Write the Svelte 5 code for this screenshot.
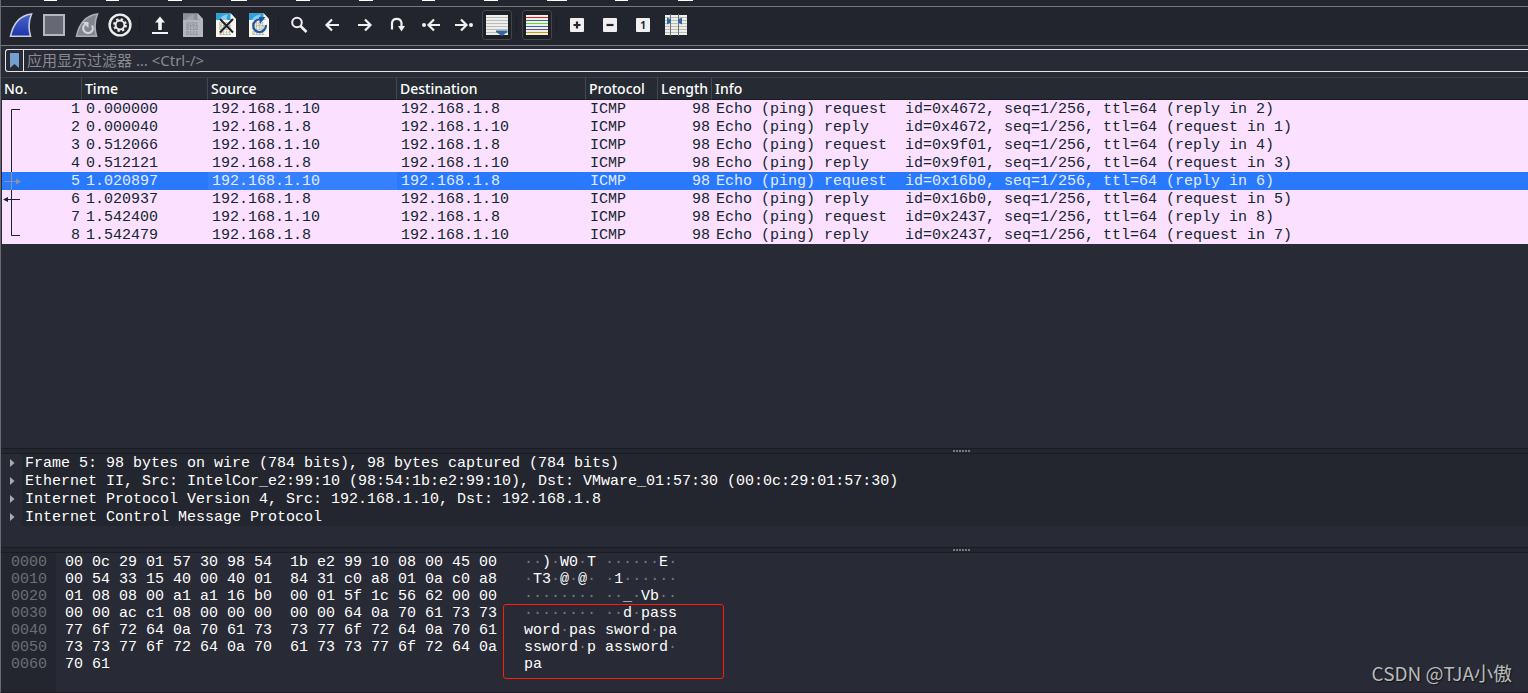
<script lang="ts">
  interface Packet {
    no: number;
    time: string;
    src: string;
    dst: string;
    proto: string;
    len: number;
    info: string;
  }

  const menus = [
    { label: 'File', gap: 43, width: 13 },
    { label: 'Edit', gap: 49, width: 13 },
    { label: 'View', gap: 49, width: 14 },
    { label: 'Go', gap: 49, width: 16 },
    { label: 'Capture', gap: 49, width: 14 },
    { label: 'Analyze', gap: 49, width: 14 },
    { label: 'Statistics', gap: 49, width: 13 },
    { label: 'Telephony', gap: 49, width: 14 },
    { label: 'Wireless', gap: 49, width: 20 },
    { label: 'Tools', gap: 48, width: 13 },
    { label: 'Help', gap: 50, width: 15 }
  ];

  const tools = [
    { icon: 'start', label: 'Start capture' },
    { icon: 'stop', label: 'Stop capture' },
    { icon: 'restart', label: 'Restart capture' },
    { icon: 'options', label: 'Capture options' },
    { icon: 'sep', label: '' },
    { icon: 'open', label: 'Open file' },
    { icon: 'save', label: 'Save file' },
    { icon: 'close', label: 'Close file' },
    { icon: 'reload', label: 'Reload file' },
    { icon: 'sep', label: '' },
    { icon: 'find', label: 'Find packet' },
    { icon: 'prev', label: 'Previous packet' },
    { icon: 'next', label: 'Next packet' },
    { icon: 'goto', label: 'Go to packet' },
    { icon: 'first', label: 'First packet' },
    { icon: 'last', label: 'Last packet' },
    { icon: 'autoscroll', label: 'Auto scroll', checked: true },
    { icon: 'sep', label: '' },
    { icon: 'colorize', label: 'Colorize packets', checked: true },
    { icon: 'sep', label: '' },
    { icon: 'zoomin', label: 'Zoom in' },
    { icon: 'zoomout', label: 'Zoom out' },
    { icon: 'zoomreset', label: 'Normal size' },
    { icon: 'columns', label: 'Resize columns' }
  ];

  const columns = ['No.', 'Time', 'Source', 'Destination', 'Protocol', 'Length', 'Info'];

  const A = '192.168.1.10';
  const B = '192.168.1.8';

  function packet(no: number, time: string, id: string): Packet {
    const request = no % 2 === 1;
    const kind = request ? 'request ' : 'reply   ';
    const peer = request ? `(reply in ${no + 1})` : `(request in ${no - 1})`;
    return {
      no,
      time,
      src: request ? A : B,
      dst: request ? B : A,
      proto: 'ICMP',
      len: 98,
      info: `Echo (ping) ${kind} id=${id}, seq=1/256, ttl=64 ${peer}`
    };
  }

  const packets: Packet[] = [
    packet(1, '0.000000', '0x4672'),
    packet(2, '0.000040', '0x4672'),
    packet(3, '0.512066', '0x9f01'),
    packet(4, '0.512121', '0x9f01'),
    packet(5, '1.020897', '0x16b0'),
    packet(6, '1.020937', '0x16b0'),
    packet(7, '1.542400', '0x2437'),
    packet(8, '1.542479', '0x2437')
  ];

  const layers = [
    'Frame 5: 98 bytes on wire (784 bits), 98 bytes captured (784 bits)',
    'Ethernet II, Src: IntelCor_e2:99:10 (98:54:1b:e2:99:10), Dst: VMware_01:57:30 (00:0c:29:01:57:30)',
    'Internet Protocol Version 4, Src: 192.168.1.10, Dst: 192.168.1.8',
    'Internet Control Message Protocol'
  ];

  const dump = [
    ['0000', '00 0c 29 01 57 30 98 54  1b e2 99 10 08 00 45 00', '··)·W0·T ······E·'],
    ['0010', '00 54 33 15 40 00 40 01  84 31 c0 a8 01 0a c0 a8', '·T3·@·@· ·1······'],
    ['0020', '01 08 08 00 a1 a1 16 b0  00 01 5f 1c 56 62 00 00', '········ ··_·Vb··'],
    ['0030', '00 00 ac c1 08 00 00 00  00 00 64 0a 70 61 73 73', '········ ··d·pass'],
    ['0040', '77 6f 72 64 0a 70 61 73  73 77 6f 72 64 0a 70 61', 'word·pas sword·pa'],
    ['0050', '73 73 77 6f 72 64 0a 70  61 73 73 77 6f 72 64 0a', 'ssword·p assword·'],
    ['0060', '70 61', 'pa']
  ];

  let selected = $state(5);
  let filter = $state('');

  // unprintable bytes are dimmed, so split them from the readable runs
  function runs(text: string): string[] {
    return text.match(/·+|[^·]+/g) ?? [];
  }
</script>

{#snippet fin(fill: string, stroke: string)}
  <path d="M1.5 23.3C4 11 11 2.5 22.5 1C19.5 8 19.5 16 21.5 23.3Z" {fill} {stroke} stroke-width="1.6" />
{/snippet}

{#snippet page(paper: string, band: string, ink: string)}
  <path d="M2 0.5H17L22 6V24H2Z" fill={paper} />
  <path d="M2 0.5H17L19 7H2Z" fill={band} />
  <path d="M5 7C7 3 11 1.5 14 1.5C12.5 4 12.5 5 13 7Z" fill={paper} opacity="0.5" />
  <path d="M16.5 0.5L22 6.5H16.5Z" fill={paper} />
  <g class="bits" fill={ink}>
    <text x="5" y="12.5">0101</text>
    <text x="5" y="17">0110</text>
    <text x="5" y="21.5">0111</text>
  </g>
{/snippet}

{#snippet glyph(icon: string)}
  <svg width="24" height="24" viewBox="0 0 24 24" fill="none" aria-hidden="true">
    {#if icon === 'start'}
      <defs>
        <linearGradient id="fin" x1="0" y1="0" x2="0" y2="1">
          <stop offset="0" stop-color="#4a66cf" />
          <stop offset="1" stop-color="#1c35a8" />
        </linearGradient>
      </defs>
      {@render fin('url(#fin)', '#c9cedd')}
    {:else if icon === 'stop'}
      <rect x="2" y="2" width="20" height="20" fill="#666973" stroke="#b4b6c2" stroke-width="2" />
    {:else if icon === 'restart'}
      {@render fin('#84868e', '#abadb6')}
      <path d="M10 11.5A4.8 4.8 0 1 0 17 12.5" stroke="#d5d6da" stroke-width="2.2" />
      <path d="M7.5 9H13.5V15Z" fill="#d5d6da" />
    {:else if icon === 'options'}
      <circle cx="12" cy="12" r="10.4" stroke="#efefef" stroke-width="2.4" />
      <circle cx="12" cy="12" r="6" stroke="#efefef" stroke-width="1.8" stroke-dasharray="2.4 2.312" />
      <circle cx="12" cy="12" r="4.4" stroke="#efefef" stroke-width="2" />
    {:else if icon === 'open'}
      <path d="M12 3.5L17 9.5H13.8V17H10.2V9.5H7ZM4 19H20V21H4Z" fill="#f4f4f4" />
    {:else if icon === 'save'}
      {@render page('#b4b6be', '#8e9098', '#7b7d85')}
    {:else if icon === 'close'}
      {@render page('#f6f6ec', '#2ba4dd', '#8b8b80')}
      <path d="M6 6L19 19.5M19 6L6 19.5" stroke="#1d2026" stroke-width="2" />
    {:else if icon === 'reload'}
      {@render page('#f6f6ec', '#2ba4dd', '#8b8b80')}
      <path d="M13 6.5A6.3 6.3 0 1 0 18.8 12" stroke="#2054a0" stroke-width="2.2" />
      <path d="M12 4H18.5L13 11Z" fill="#2054a0" />
    {:else if icon === 'find'}
      <circle cx="10" cy="9.5" r="4.8" stroke="#f0f0f0" stroke-width="2" />
      <path d="M13.5 13L19.5 19" stroke="#f0f0f0" stroke-width="2.6" />
    {:else if icon === 'prev'}
      <path d="M19 12H7M12 6.5L6.5 12L12 17.5" stroke="#f0f0f0" stroke-width="2.2" />
    {:else if icon === 'next'}
      <path d="M5 12H17M12 6.5L17.5 12L12 17.5" stroke="#f0f0f0" stroke-width="2.2" />
    {:else if icon === 'goto'}
      <path d="M6 16.5V10A4.8 4.8 0 0 1 15.5 10V14" stroke="#f0f0f0" stroke-width="2.2" />
      <path d="M12 13H19L15.5 18.5Z" fill="#f0f0f0" />
    {:else if icon === 'first'}
      <circle cx="5" cy="12" r="2" fill="#f0f0f0" />
      <path d="M21 12H10M15 6.5L9.5 12L15 17.5" stroke="#f0f0f0" stroke-width="2.2" />
    {:else if icon === 'last'}
      <circle cx="19" cy="12" r="2" fill="#f0f0f0" />
      <path d="M3 12H14M9 6.5L14.5 12L9 17.5" stroke="#f0f0f0" stroke-width="2.2" />
    {:else if icon === 'autoscroll'}
      <rect x="1" y="2" width="22" height="20" fill="#eeeeec" />
      <path d="M1 4.5H23M1 7.5H23M1 10.5H23M1 13.5H23M1 16.5H23M1 19.5H23" stroke="#babdb6" />
      <path d="M11 17.5H22.5V19L17 23L11 19Z" fill="#3465a4" />
    {:else if icon === 'colorize'}
      <rect x="1" y="2" width="22" height="20" fill="#eeeeec" />
      <path d="M1 4.5H23" stroke="#e02020" />
      <path d="M1 7.5H23M1 13.5H23" stroke="#3465a4" />
      <path d="M1 10.5H23" stroke="#73d216" />
      <path d="M1 16.5H23" stroke="#75507b" />
      <path d="M1 19.5H23" stroke="#c4a000" />
    {:else if icon === 'zoomin'}
      <rect x="5" y="5" width="14" height="14" rx="1" fill="#f0f0f0" />
      <path d="M8.5 12H15.5M12 8.5V15.5" stroke="#23262e" stroke-width="2.2" />
    {:else if icon === 'zoomout'}
      <rect x="5" y="5" width="14" height="14" rx="1" fill="#f0f0f0" />
      <path d="M8.5 12H15.5" stroke="#23262e" stroke-width="2.2" />
    {:else if icon === 'zoomreset'}
      <rect x="5" y="5" width="14" height="14" rx="1" fill="#f0f0f0" />
      <text class="one" x="12" y="16" text-anchor="middle" fill="#23262e">1</text>
    {:else if icon === 'columns'}
      <rect x="1" y="2" width="22" height="20" fill="#eeeeec" />
      <path d="M1 4.5H23M1 7.5H23M1 10.5H23M1 13.5H23M1 16.5H23M1 19.5H23" stroke="#babdb6" />
      <path d="M6.5 1V23M14.5 1V23" stroke="#6f716d" />
      <path d="M3 4.5L7 6.5V9.5L3 11.5ZM18 4.5L14 6.5V9.5L18 11.5Z" fill="#3465a4" />
    {/if}
  </svg>
{/snippet}

{#snippet related(no: number)}
  <svg class="related" width="20" height="18" viewBox="0 0 20 18" fill="none" aria-hidden="true">
    {#if no === packets[0].no}
      <path d="M18 9.5H9.5V18" stroke="#12272e" />
    {:else if no === packets.length}
      <path d="M18 9.5H9.5V0" stroke="#12272e" />
    {:else if no === 5}
      <path d="M9.5 0V18M2 9.5H15" stroke="#8b93a5" />
      <path d="M14 6.5L19 9.5L14 12.5Z" fill="#8b93a5" />
    {:else if no === 6}
      <path d="M9.5 0V18M5 9.5H18" stroke="#12272e" />
      <path d="M6 7L1 9.5L6 12Z" fill="#12272e" />
    {:else}
      <path d="M9.5 0V18" stroke="#12272e" />
    {/if}
  </svg>
{/snippet}

{#snippet splitter()}
  <div class="splitter">
    {#each Array(6) as _}
      <i></i>
    {/each}
  </div>
{/snippet}

<div class="window">
  <nav class="menubar">
    {#each menus as menu}
      <button
        type="button"
        aria-label={menu.label}
        style="margin-left: {menu.gap}px; width: {menu.width}px"
      ></button>
    {/each}
  </nav>

  <div class="toolbar" role="toolbar" aria-label="Main toolbar">
    {#each tools as tool}
      {#if tool.icon === 'sep'}
        <span class="sep"></span>
      {:else}
        <button type="button" class="tool" aria-label={tool.label}>
          <span class="face" class:checked={tool.checked}>{@render glyph(tool.icon)}</span>
        </button>
      {/if}
    {/each}
  </div>

  <div class="filter">
    <button type="button" class="bookmark" aria-label="Filter bookmarks">
      <svg width="9" height="15" viewBox="0 0 9 15" aria-hidden="true">
        <path d="M0 0H9V15L4.5 11L0 15Z" fill="#729fcf" />
      </svg>
    </button>
    <input
      type="text"
      aria-label="应用显示过滤器"
      placeholder="应用显示过滤器 … <Ctrl-/>"
      bind:value={filter}
    />
  </div>

  <main class="packets">
    <table>
      <colgroup>
        <col class="c-no" />
        <col class="c-time" />
        <col class="c-addr" />
        <col class="c-addr" />
        <col class="c-proto" />
        <col class="c-len" />
        <col />
      </colgroup>
      <thead>
        <tr>
          {#each columns as column}
            <th scope="col">{column}</th>
          {/each}
        </tr>
      </thead>
      <tbody>
        {#each packets as p}
          <tr class:selected={p.no === selected} onclick={() => (selected = p.no)}>
            <td><div class="no">{@render related(p.no)}<span>{p.no}</span></div></td>
            <td>{p.time}</td>
            <td class="src">{p.src}</td>
            <td>{p.dst}</td>
            <td>{p.proto}</td>
            <td class="num">{p.len}</td>
            <td>{p.info}</td>
          </tr>
        {/each}
      </tbody>
    </table>
  </main>

  {@render splitter()}

  <ul class="details">
    {#each layers as layer}
      <li>
        <button type="button" aria-expanded="false">
          <svg width="20" height="18" viewBox="0 0 20 18" aria-hidden="true">
            <path d="M8 5L12.5 9L8 13Z" fill="#a9abb0" />
          </svg>
          <span>{layer}</span>
        </button>
      </li>
    {/each}
  </ul>

  {@render splitter()}

  <section class="bytes">
    {#each dump as [offset, hex, ascii]}
      <div class="line">
        <span class="offset">{offset}</span>
        <span class="hex">{hex}</span>
        <span class="ascii">{#each runs(ascii) as run}<span class:dim={run[0] === '·'}>{run}</span>{/each}</span>
      </div>
    {/each}
    <div class="highlight"></div>
  </section>

  <div class="watermark">CSDN @TJA小傲</div>
</div>

<style>
  :global(body) {
    margin: 0;
    background: #282a35;
  }

  .window {
    --mono: 'Liberation Mono', 'Courier New', monospace;
    --ui: 'Noto Sans', 'Noto Sans CJK SC', sans-serif;
    position: relative;
    box-sizing: border-box;
    min-height: 100vh;
    display: flex;
    flex-direction: column;
    border-left: 1px solid #6b6b6f;
    border-bottom: 1px solid #1d1e26;
    background: #282a35;
    color: #fff;
    font-family: var(--ui);
    font-size: 15px;
    overflow: hidden;
  }

  button {
    margin: 0;
    padding: 0;
    border: 0;
    background: none;
    color: inherit;
    font: inherit;
  }

  .menubar {
    display: flex;
    height: 6px;
    background: #23262e;
    border-bottom: 1px solid #77777c;
  }

  .menubar button {
    flex: none;
    height: 1px;
    background: #fff;
  }

  .toolbar {
    display: flex;
    padding: 3px 0 5px 3px;
    background: #23252e;
    border-bottom: 1px solid #77777c;
  }

  .tool {
    display: flex;
    justify-content: center;
    width: 33px;
    height: 30px;
  }

  .face {
    box-sizing: border-box;
    display: flex;
    align-items: center;
    justify-content: center;
    width: 30px;
    height: 30px;
    border: 1px solid transparent;
    border-radius: 3px;
  }

  .face.checked {
    border-color: #44464d;
    background: #1e2027;
  }

  .sep {
    box-sizing: border-box;
    width: 7px;
    margin: 6px 0;
    border-left: 3px solid transparent;
    background: linear-gradient(#1d1f26, #1d1f26) left / 1px 100% no-repeat;
  }

  .bits {
    font: 5px var(--mono);
  }

  .one {
    font: bold 10px var(--ui);
  }

  .filter {
    display: flex;
    height: 21px;
    margin: 3px 0 5px 4px;
    border: 1px solid #e6e6e6;
    border-right: 0;
    border-radius: 3px 0 0 3px;
  }

  .bookmark {
    display: flex;
    justify-content: center;
    width: 18px;
    padding-top: 3px;
    border-right: 1px solid #e6e6e6;
  }

  .filter input {
    flex: 1;
    min-width: 0;
    padding: 0 3px 2px;
    border: 0;
    outline: 0;
    background: none;
    color: #fff;
    font: 15px var(--ui);
  }

  .filter input::placeholder {
    color: #8a8b90;
    opacity: 1;
  }

  .packets {
    flex: 1;
    padding-left: 1px;
    border-top: 1px solid #3b3d45;
  }

  table {
    width: 100%;
    table-layout: fixed;
    border-collapse: separate;
    border-spacing: 0;
  }

  .c-no {
    width: 80px;
  }

  .c-time {
    width: 126px;
  }

  .c-addr {
    width: 189px;
  }

  .c-proto {
    width: 72px;
  }

  .c-len {
    width: 54px;
  }

  th {
    height: 21px;
    padding: 0 0 0 3px;
    border-right: 1px solid #44474e;
    border-bottom: 1px solid #1a1c22;
    background: #262b33;
    font-size: 14px;
    font-weight: 500;
    line-height: 21px;
    text-align: left;
    white-space: nowrap;
  }

  th:first-child {
    padding-left: 2px;
  }

  th:last-child {
    border-right: 0;
  }

  td {
    padding: 2px 0 0 4px;
    background: #fce0ff;
    color: #12272e;
    font: 15px/16px var(--mono);
    white-space: pre;
    overflow: hidden;
  }

  td:first-child {
    padding: 0 2px 0 0;
  }

  .num {
    padding-right: 2px;
    text-align: right;
  }

  .no {
    display: flex;
    justify-content: space-between;
  }

  .no span {
    padding-top: 2px;
  }

  .related {
    display: block;
  }

  .selected td {
    background: #2979ff;
    color: #e2ecff;
  }

  .selected .src {
    background: #3580ff;
  }

  .splitter {
    display: flex;
    align-items: center;
    justify-content: center;
    gap: 1px;
    height: 4px;
    padding-left: 394px;
    border: solid #1a1c23;
    border-width: 1px 0;
    background: #23262e;
  }

  .splitter i {
    width: 2px;
    height: 2px;
    background: #77787d;
  }

  .details {
    margin: 0;
    padding: 0 0 21px 1px;
    list-style: none;
    font: 15px/16px var(--mono);
  }

  .details button {
    display: flex;
    width: 100%;
    text-align: left;
  }

  .details svg {
    flex: none;
  }

  .details span {
    flex: 1;
    padding: 2px 0 0 3px;
    background: #23262e;
    white-space: pre;
  }

  .bytes {
    position: relative;
    padding: 0 0 20px 1px;
    background: linear-gradient(#23262e, #23262e) left / 55px 100% no-repeat;
    font: 15px/15px var(--mono);
  }

  .line {
    display: flex;
    padding-top: 2px;
    white-space: pre;
  }

  .offset {
    width: 54px;
    padding-left: 9px;
    box-sizing: border-box;
    color: #6d6e74;
  }

  .hex {
    width: 432px;
    margin: 0 27px 0 9px;
  }

  .dim {
    color: #77787e;
  }

  /* marker around the password payload */
  .highlight {
    position: absolute;
    box-sizing: border-box;
    left: 502px;
    top: 51px;
    width: 221px;
    height: 75px;
    border: 1px solid #ff1e0a;
    border-radius: 3px;
  }

  .watermark {
    position: absolute;
    right: 16px;
    bottom: 5px;
    color: #b9babd;
    font: 19px/28px 'Noto Sans CJK SC', sans-serif;
    text-shadow: 1px 1px 1px #111;
  }
</style>
